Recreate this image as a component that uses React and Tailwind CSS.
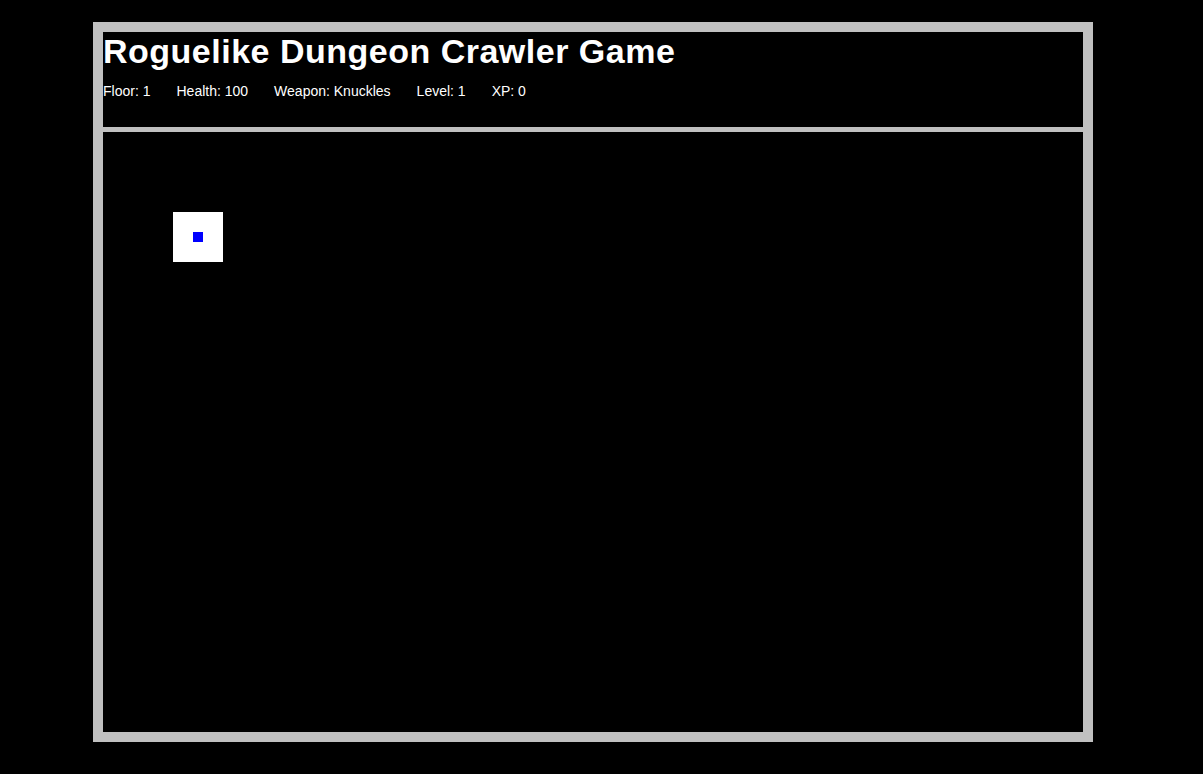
import React from 'react';

const stats = [
  ['Floor', '1'],
  ['Health', '100'],
  ['Weapon', 'Knuckles'],
  ['Level', '1'],
  ['XP', '0'],
];

const App = () => {
  return (
    <div className="min-h-[774px] w-full bg-black pt-[22px] pb-[32px] font-['Liberation_Sans',Arial,sans-serif] text-white">
      <div className="ml-[93px] w-[1000px] border-[10px] border-[#c0c0c0] bg-black">
        {/* Header */}
        <div className="h-[100px] border-b-[5px] border-[#c0c0c0]">
          <h1 className="m-0 text-[34px] font-bold leading-[38px] tracking-[0.5px]">Roguelike Dungeon Crawler Game</h1>
          <div className="mt-[13px] flex gap-[26px] text-[14px] leading-[16px]">
            {stats.map(([label, value]) => (
              <span key={label}>
                {label}: {value}
              </span>
            ))}
          </div>
        </div>

        {/* Map */}
        <div className="relative h-[600px] w-full bg-black">
          <div className="absolute left-[70px] top-[80px] flex h-[50px] w-[50px] items-center justify-center bg-white">
            <div className="h-[10px] w-[10px] bg-[#0000ff]"></div>
          </div>
        </div>
      </div>
    </div>
  );
};

export default App;
